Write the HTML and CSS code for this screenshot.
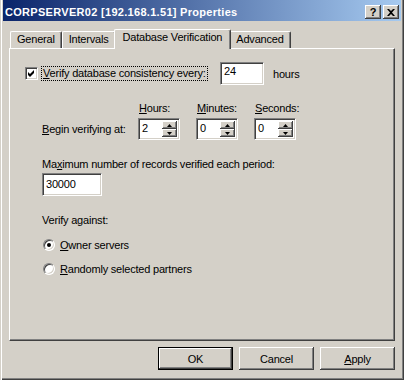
FILE: index.html
```html
<!DOCTYPE html>
<html lang="en">
<head>
  <meta charset="UTF-8" />
  <title>CORPSERVER02 [192.168.1.51] Properties</title>
  <link rel="stylesheet" href="styles.css">
</head>
<body>
  <div class="window">
    <div class="titlebar">
      <span class="title">CORPSERVER02 [192.168.1.51] Properties</span>
      <div class="caption-btns">
        <span class="cap-btn">?</span>
        <span class="cap-btn">
          <svg width="8" height="7" viewBox="0 0 8 7"><path d="M0 0h2l2 2 2-2h2L5 3.5 8 7H6L4 5 2 7H0l3-3.5z" fill="#000"/></svg>
        </span>
      </div>
    </div>

    <div class="tabs">
      <div class="tab">General</div>
      <div class="tab">Intervals</div>
      <div class="tab active">Database Verification</div>
      <div class="tab">Advanced</div>
    </div>

    <div class="panel">
      <div class="check-row">
        <span class="checkbox">
          <svg width="7" height="7" viewBox="0 0 7 7"><path d="M0 2l2 2 4-4v3l-4 4-2-2z" fill="#000"/></svg>
        </span>
        <span class="label-cell"><span class="focus"><u>V</u>erify database consistency every:</span></span>
        <div class="edit edit-hours">24</div>
        <span class="unit">hours</span>
      </div>

      <div class="spin-row">
        <span class="begin-label"><u>B</u>egin verifying at:</span>
        <div class="spin-col">
          <span class="spin-label"><u>H</u>ours:</span>
          <div class="spin">
            <span class="spin-value">2</span>
            <div class="spin-btns">
              <span class="spin-btn"><svg width="5" height="3" viewBox="0 0 5 3"><path d="M2.5 0L5 3H0z"/></svg></span>
              <span class="spin-btn"><svg width="5" height="3" viewBox="0 0 5 3"><path d="M0 0h5L2.5 3z"/></svg></span>
            </div>
          </div>
        </div>
        <div class="spin-col">
          <span class="spin-label"><u>M</u>inutes:</span>
          <div class="spin">
            <span class="spin-value">0</span>
            <div class="spin-btns">
              <span class="spin-btn"><svg width="5" height="3" viewBox="0 0 5 3"><path d="M2.5 0L5 3H0z"/></svg></span>
              <span class="spin-btn"><svg width="5" height="3" viewBox="0 0 5 3"><path d="M0 0h5L2.5 3z"/></svg></span>
            </div>
          </div>
        </div>
        <div class="spin-col">
          <span class="spin-label"><u>S</u>econds:</span>
          <div class="spin">
            <span class="spin-value">0</span>
            <div class="spin-btns">
              <span class="spin-btn"><svg width="5" height="3" viewBox="0 0 5 3"><path d="M2.5 0L5 3H0z"/></svg></span>
              <span class="spin-btn"><svg width="5" height="3" viewBox="0 0 5 3"><path d="M0 0h5L2.5 3z"/></svg></span>
            </div>
          </div>
        </div>
      </div>

      <p class="label max-label">Ma<u>x</u>imum number of records verified each period:</p>
      <div class="edit edit-max">30000</div>

      <p class="label against-label">Verify against:</p>
      <div class="radio-row first">
        <span class="radio checked"></span>
        <span><u>O</u>wner servers</span>
      </div>
      <div class="radio-row">
        <span class="radio"></span>
        <span><u>R</u>andomly selected partners</span>
      </div>
    </div>

    <div class="buttons">
      <button class="btn default">OK</button>
      <button class="btn">Cancel</button>
      <button class="btn"><u>A</u>pply</button>
    </div>
  </div>
</body>
</html>
```

FILE: styles.css
```css
body {
  margin: 0;
  background: #d4d0c8;
  font-family: "Liberation Sans", Arial, sans-serif;
  font-size: 11px;
  letter-spacing: -0.2px;
  color: #000;
}

u {
  text-decoration-thickness: 1px;
  text-underline-offset: 1px;
}

.window {
  box-sizing: border-box;
  width: 404px;
  height: 380px;
  padding: 0 3px;
  display: flex;
  flex-direction: column;
  box-shadow: inset 1px 0 #d4d0c8, inset 2px 0 #fff, inset -1px -1px #404040, inset -2px -2px #808080;
}

/* title bar */
.titlebar {
  height: 21px;
  flex: none;
  display: flex;
  justify-content: space-between;
  padding: 0 2px;
  background: linear-gradient(to right, #0a246a, #a6caf0);
  color: #fff;
  font-weight: bold;
}

.title {
  padding-top: 3px;
  line-height: 18px;
  letter-spacing: 0.3px;
}

.caption-btns {
  display: flex;
  gap: 2px;
  padding-top: 5px;
}

.cap-btn {
  box-sizing: border-box;
  width: 16px;
  height: 14px;
  display: flex;
  align-items: center;
  justify-content: center;
  background: #d4d0c8;
  color: #000;
  font-size: 11px;
  line-height: 14px;
  letter-spacing: 0;
  box-shadow: inset -1px -1px #404040, inset 1px 1px #fff, inset -2px -2px #808080;
}

/* tabs */
.tabs {
  display: flex;
  align-items: flex-end;
  height: 19px;
  flex: none;
  margin: 8px 6px 0;
  padding-left: 1px;
  position: relative;
  z-index: 1;
}

.tab {
  box-sizing: border-box;
  height: 17px;
  padding: 0 6px;
  line-height: 15px;
  border: 1px solid;
  border-color: #fff #404040 transparent #fff;
  border-bottom: none;
  border-radius: 2px 2px 0 0;
  box-shadow: inset -1px 0 #808080;
  white-space: nowrap;
}

.tab.active {
  height: 20px;
  margin: 0 -2px -1px;
  padding: 0 8px;
  line-height: 14px;
  background: #d4d0c8;
  position: relative;
  z-index: 2;
}

/* panel */
.panel {
  box-sizing: border-box;
  height: 293px;
  flex: none;
  margin: 0 6px;
  padding: 13px 0 0 15px;
  border: 1px solid;
  border-color: #fff #404040 #404040 #fff;
  box-shadow: inset -1px -1px #808080;
}

.check-row {
  display: grid;
  grid-template-columns: 13px 182px 44px auto;
  align-items: center;
  height: 23px;
}

.checkbox {
  box-sizing: border-box;
  width: 13px;
  height: 13px;
  display: flex;
  align-items: center;
  justify-content: center;
  background: #fff;
  border: 1px solid;
  border-color: #808080 #fff #fff #808080;
  box-shadow: inset 1px 1px #404040, inset -1px -1px #d4d0c8;
}

.label-cell {
  padding-left: 3px;
}

.focus {
  display: inline-block;
  padding: 0 1px;
  line-height: 13px;
  border: 1px dotted #000;
}

.edit {
  box-sizing: border-box;
  height: 23px;
  padding: 2px 0 0 3px;
  line-height: 13px;
  background: #fff;
  border: 1px solid;
  border-color: #808080 #fff #fff #808080;
  box-shadow: inset 1px 1px #404040, inset -1px -1px #d4d0c8;
}

.unit {
  padding-left: 9px;
}

.spin-row {
  display: flex;
  align-items: flex-end;
  margin: 17px 0 0 17px;
}

.begin-label {
  width: 96px;
  white-space: nowrap;
  line-height: 13px;
  margin-bottom: 4px;
}

.spin-col {
  display: flex;
  flex-direction: column;
  width: 42px;
}

.spin-col + .spin-col {
  margin-left: 16px;
}

.spin-label {
  padding-left: 1px;
  line-height: 13px;
  margin-bottom: 3px;
}

.spin {
  box-sizing: border-box;
  height: 22px;
  display: flex;
  justify-content: space-between;
  padding: 2px;
  background: #fff;
  border: 1px solid;
  border-color: #808080 #fff #fff #808080;
  box-shadow: inset 1px 1px #404040, inset -1px -1px #d4d0c8;
}

.spin-value {
  padding: 1px 0 0 1px;
  line-height: 13px;
}

.spin-btns {
  display: flex;
  flex-direction: column;
  width: 15px;
}

.spin-btn {
  flex: 1;
  display: flex;
  align-items: center;
  justify-content: center;
  background: #d4d0c8;
  box-shadow: inset -1px -1px #404040, inset 1px 1px #fff, inset -2px -2px #808080;
}

.label {
  margin: 0 0 0 17px;
  line-height: 13px;
}

.max-label {
  margin-top: 18px;
}

.edit-max {
  width: 60px;
  margin: 2px 0 0 17px;
  padding-top: 4px;
}

.against-label {
  margin-top: 18px;
}

.radio-row {
  display: flex;
  align-items: center;
  gap: 5px;
  height: 14px;
  margin: 10px 0 0 18px;
}

.radio-row.first {
  margin-top: 11px;
}

.radio {
  box-sizing: border-box;
  width: 12px;
  height: 12px;
  display: flex;
  align-items: center;
  justify-content: center;
  border-radius: 50%;
  background: #fff;
  border: 1px solid;
  border-color: #808080 #fff #fff #808080;
  box-shadow: inset 1px 1px #404040, inset -1px -1px #d4d0c8;
}

.radio.checked::after {
  content: "";
  width: 4px;
  height: 4px;
  border-radius: 50%;
  background: #000;
}

/* bottom buttons */
.buttons {
  display: flex;
  justify-content: flex-end;
  gap: 6px;
  margin: 6px 6px 0;
}

.btn {
  box-sizing: border-box;
  width: 75px;
  height: 23px;
  padding: 0;
  font: inherit;
  letter-spacing: inherit;
  color: #000;
  background: #d4d0c8;
  border: none;
  box-shadow: inset -1px -1px #404040, inset 1px 1px #fff, inset -2px -2px #808080;
}

.btn.default {
  border: 1px solid #000;
}
```
